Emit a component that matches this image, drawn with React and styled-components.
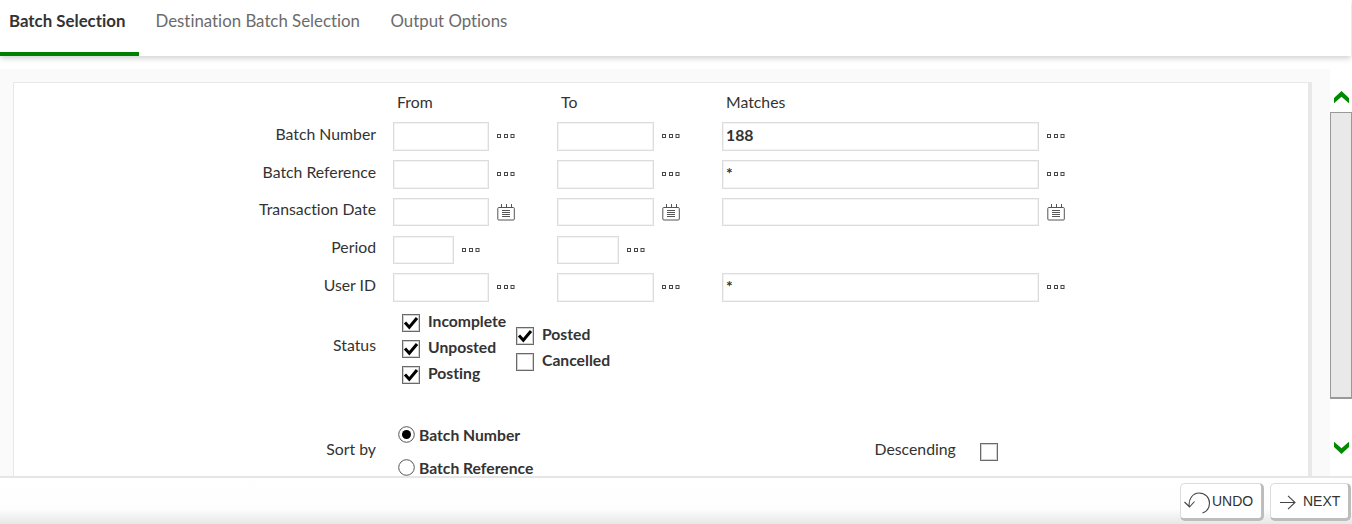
import React from "react";
import styled, { createGlobalStyle } from "styled-components";

const GlobalStyle = createGlobalStyle`
  * { box-sizing: border-box; }
  body { margin: 0; background: #fff; overflow: hidden; color: #333; font: 15.8px/20px Lato, "Open Sans", sans-serif; font-variant-ligatures: none; }
`;

const Page = styled.div`
  width: 1352px;
  height: 524px;
  display: flex;
  flex-direction: column;
`;

const TabBar = styled.nav`
  height: 56px;
  flex: none;
  display: flex;
  width: 1351px;
  font-size: 16.83px;
  box-shadow: 0 2px 6px rgba(0, 0, 0, 0.2);
`;

const Tab = styled.div`
  height: 56px;
  padding: 11px 0 0 ${(p) => p.$left}px;
  width: ${(p) => p.$width}px;
  white-space: nowrap;
  color: ${(p) => (p.$active ? "#333" : "#6b6b6b")};
  font-weight: ${(p) => (p.$active ? 700 : 400)};
  border-bottom: 4px solid ${(p) => (p.$active ? "#008000" : "transparent")};
`;

const Main = styled.main`
  height: 407px;
  margin-top: 13px;
  flex: none;
  display: flex;
  overflow: hidden;
`;

const Canvas = styled.div`
  width: 1330px;
  background: #fafafa;
  padding: 13px 18px 0 13px;
`;

const Panel = styled.section`
  height: 394px;
  background: #fff;
  border: 1px solid #e8e8e8;
  border-right-width: 4px;
  border-bottom: 0;
  overflow: hidden;
`;

const Row = styled.div`
  display: grid;
  grid-template-columns: 362px 17px 164px 165px 1fr;
  height: ${(p) => p.$height}px;
`;

const Label = styled.div`
  text-align: right;
  padding-top: ${(p) => p.$top ?? 2}px;
`;

const Heading = styled.div`
  padding: 9px 0 0 4px;
`;

const Field = styled.div`
  display: flex;
  align-items: flex-start;
  gap: 8px;
`;

const Input = styled.input`
  width: ${(p) => p.$width}px;
  height: ${(p) => p.$height}px;
  border: 1px solid #dcdcdc;
  box-shadow: inset 0 0 0 1px #f3f3f3;
  padding: 0 3px 4px;
  outline: 0;
  background: #fff;
  color: #333;
  font: 700 15.8px Lato, sans-serif;
`;

const Icon = styled.svg`
  display: block;
  flex: none;
  margin-top: ${(p) => p.$top ?? 0}px;
`;

const Status = styled.div`
  grid-column: 3 / -1;
  display: flex;
  padding: 3px 0 0 9px;
`;

const Group = styled.div`
  width: 114px;
  padding-top: ${(p) => p.$top}px;
`;

const Check = styled.label`
  display: flex;
  gap: 8px;
  height: 26px;
  font-weight: 700;
  font-size: 15.7px;
  white-space: nowrap;
`;

const CheckText = styled.span`
  margin-top: -3px;
`;

const Box = styled.span`
  width: 18px;
  height: 18px;
  flex: none;
  border: 1px solid #6a6a6a;
  box-shadow: inset 0 0 0 1px #d2d2d2;
`;

const Radios = styled.div`
  padding: 0 0 0 5px;
`;

const Radio = styled.label`
  display: flex;
  align-items: flex-start;
  gap: 4px;
  height: 33px;
  font-weight: 700;
  font-size: 15.7px;
  white-space: nowrap;
`;

const RadioText = styled.span`
  margin-top: -1px;
`;

const Descending = styled.div`
  display: flex;
  padding: 13px 0 0 152.5px;
`;

const DescendingText = styled.span`
  width: 105.5px;
`;

const DescendingBox = styled(Box)`
  margin-top: 4px;
`;

const Scroll = styled.aside`
  width: 22px;
  background: #fff;
  display: flex;
  flex-direction: column;
`;

const ScrollArrow = styled.div`
  height: ${(p) => p.$height}px;
  padding: ${(p) => p.$top}px 0 0 4px;
`;

const Thumb = styled.div`
  height: 287px;
  background: #e9e9e9;
  border: 1px solid #999;
  border-bottom-width: 2px;
`;

const Footer = styled.footer`
  height: 48px;
  border-top: 2px solid #e6e6e6;
  background: linear-gradient(#fff 0, #fdfdfd 31px, #e7e7e7 46px);
  display: flex;
  justify-content: flex-end;
  gap: 6px;
  padding: 5px 1px 0 0;
`;

const Button = styled.button`
  width: ${(p) => p.$width}px;
  height: 38px;
  display: flex;
  align-items: center;
  border: 1px solid #dcdcdc;
  border-right: 3px solid #bdbdbd;
  border-bottom: 3px solid #bdbdbd;
  border-radius: 5px;
  background: #fff;
  color: #333;
  padding: 0 0 0 ${(p) => p.$left}px;
  gap: ${(p) => p.$gap}px;
  font: 14px "Liberation Sans", Arial, sans-serif;
`;

const Dots = () => (
  <Icon width="18" height="4" viewBox="0 0 18 4" $top={12} fill="none" stroke="#484848">
    <rect x=".5" y=".5" width="3" height="3" />
    <rect x="7.5" y=".5" width="3" height="3" />
    <rect x="14" y=".5" width="3" height="3" />
  </Icon>
);

const Calendar = () => (
  <Icon width="18" height="17" viewBox="0 0 18 17" $top={6} fill="none" stroke="#555">
    <rect x=".8" y="3.5" width="16.5" height="12.5" rx="1" />
    <path d="M4.5 0v3M9.5 0v3M14.5 0v3M5 6.5h8M5 8.5h8M5 10.5h8M5 12.5h8" />
  </Icon>
);

const CheckBox = ({ checked }) => (
  <Box>
    {checked && (
      <Icon width="16" height="16" viewBox="0 0 16 16" fill="none">
        <path d="M2 7.5L6.3 12.3L14 3" stroke="#000" strokeWidth="3" />
      </Icon>
    )}
  </Box>
);

const CheckOption = ({ checked, children }) => (
  <Check>
    <CheckBox checked={checked} />
    <CheckText>{children}</CheckText>
  </Check>
);

const RadioOption = ({ checked, children }) => (
  <Radio>
    <Icon width="17" height="17" viewBox="0 0 17 17" fill="#fff">
      <circle cx="8.5" cy="8.5" r="7.8" stroke="#555" />
      {checked && <circle cx="8.5" cy="8.5" r="4.5" fill="#000" />}
    </Icon>
    <RadioText>{children}</RadioText>
  </Radio>
);

const fields = [
  { label: "Batch Number", row: 38, box: 29, value: "188" },
  { label: "Batch Reference", row: 38, box: 29, value: "*" },
  { label: "Transaction Date", row: 38, box: 28, value: "", date: true, top: 1 },
  { label: "Period", row: 37, box: 28, short: true, top: 1 },
  { label: "User ID", row: 38, box: 29, value: "*" },
];

export default function App() {
  return (
    <>
      <GlobalStyle />
      <Page>
        <TabBar>
          <Tab $active $left={9} $width={139}>Batch Selection</Tab>
          <Tab $left={16.5} $width={235}>Destination Batch Selection</Tab>
          <Tab $left={16.5} $width={160}>Output Options</Tab>
        </TabBar>
        <Main>
          <Canvas>
            <Panel>
              <Row $height={39}>
                <span />
                <span />
                <Heading>From</Heading>
                <Heading>To</Heading>
                <Heading>Matches</Heading>
              </Row>
              {fields.map((f) => {
                const Picker = f.date ? Calendar : Dots;
                return (
                  <Row key={f.label} $height={f.row}>
                    <Label $top={f.top}>{f.label}</Label>
                    <span />
                    <Field>
                      <Input $width={f.short ? 61 : 96} $height={f.box} />
                      <Picker />
                    </Field>
                    <Field>
                      <Input $width={f.short ? 62 : 97} $height={f.box} />
                      <Picker />
                    </Field>
                    {!f.short && (
                      <Field>
                        <Input $width={317} $height={f.box} defaultValue={f.value} />
                        <Picker />
                      </Field>
                    )}
                  </Row>
                );
              })}
              <Row $height={115}>
                <Label $top={24}>Status</Label>
                <span />
                <Status>
                  <Group $top={0}>
                    <CheckOption checked>Incomplete</CheckOption>
                    <CheckOption checked>Unposted</CheckOption>
                    <CheckOption checked>Posting</CheckOption>
                  </Group>
                  <Group $top={13}>
                    <CheckOption checked>Posted</CheckOption>
                    <CheckOption>Cancelled</CheckOption>
                  </Group>
                </Status>
              </Row>
              <Row $height={60}>
                <Label $top={13}>Sort by</Label>
                <span />
                <Radios>
                  <RadioOption checked>Batch Number</RadioOption>
                  <RadioOption>Batch Reference</RadioOption>
                </Radios>
                <span />
                <Descending>
                  <DescendingText>Descending</DescendingText>
                  <DescendingBox />
                </Descending>
              </Row>
            </Panel>
          </Canvas>
          <Scroll>
            <ScrollArrow $height={43} $top={22}>
              <Icon width="15" height="12" viewBox="0 0 15 12" fill="#008a00">
                <path d="M0 7L7.500 0L15 7V12.300L7.500 5.800L0 12.300Z" />
              </Icon>
            </ScrollArrow>
            <Thumb />
            <ScrollArrow $height={77} $top={43}>
              <Icon width="15" height="12" viewBox="0 0 15 12" fill="#008a00">
                <path d="M0 5L7.500 12L15 5V-.3L7.500 6.200L0 -.3Z" />
              </Icon>
            </ScrollArrow>
          </Scroll>
        </Main>
        <Footer>
          <Button $width={84} $left={3} $gap={1}>
            <Icon width="27" height="22" viewBox="0 0 27 22" $top={3} fill="none" stroke="#444" strokeWidth="1.1">
              <path d="M5.3 15C4 7 9 1 15 1C21 1 25.500 5.500 25.500 11C25.500 16 23 19.500 18.500 21M.5 10L5.500 15L10.500 9.500" />
            </Icon>
            UNDO
          </Button>
          <Button $width={81} $left={9} $gap={7}>
            <Icon width="16" height="15" viewBox="0 0 16 15" $top={3} fill="none" stroke="#444" strokeWidth="1.1">
              <path d="M0 7.500H15M8 .8L15 7.500L8 14.200" />
            </Icon>
            NEXT
          </Button>
        </Footer>
      </Page>
    </>
  );
}
